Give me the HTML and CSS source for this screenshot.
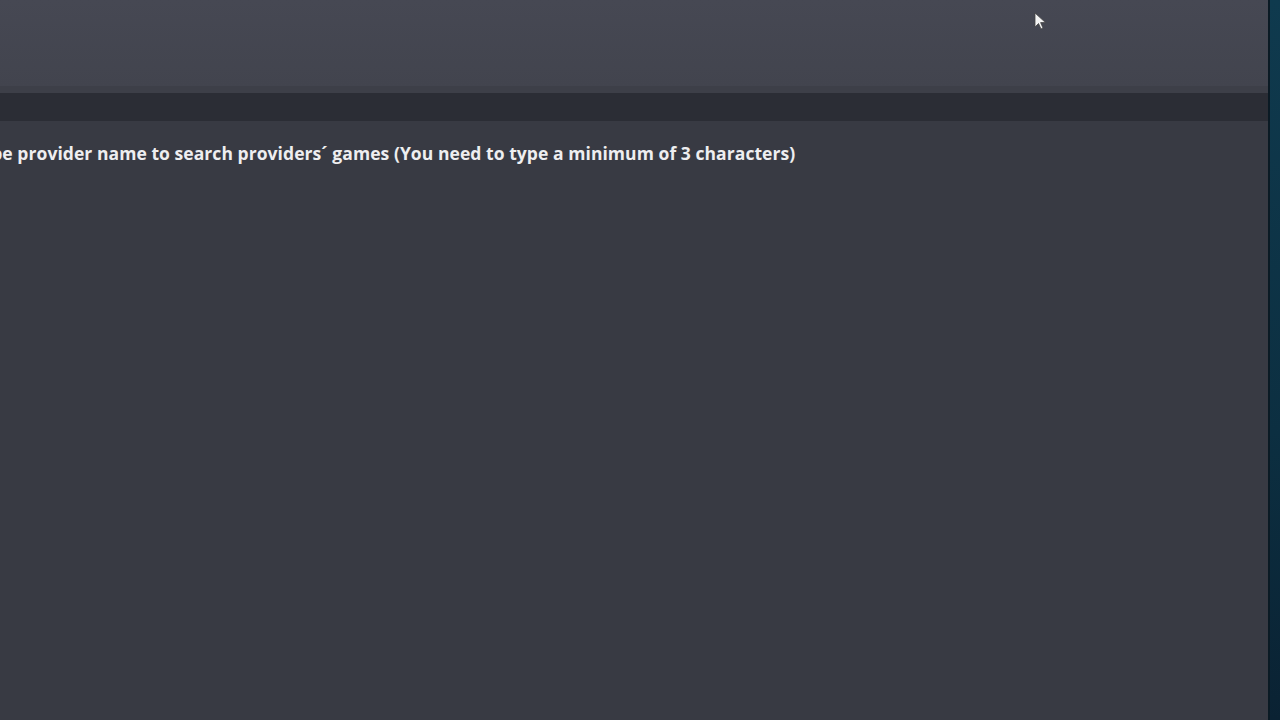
FILE: index.html
```html
<!DOCTYPE html>
<html>
<head>
<meta charset="utf-8">
<link rel="stylesheet" href="styles.css">
</head>
<body>
<div class="page">
  <main class="panel">
    <header class="top"></header>
    <div class="edge"></div>
    <div class="bar"></div>
    <section class="content">
      <p class="hint">Type provider name to search providers´ games (You need to type a minimum of 3 characters)</p>
    </section>
  </main>
  <aside class="strip"></aside>
</div>
<svg class="cursor" width="14" height="20" viewBox="0 0 14 20">
  <path d="M1 1 L1 15 L4.5 11.5 L7 17 L9 16 L6.6 10.6 L11.5 10.6 Z" fill="#f4f4f4" stroke="#444" stroke-width="0.8"/>
</svg>
</body>
</html>
```
FILE: styles.css
```css
html, body {
  margin: 0;
  padding: 0;
  width: 1280px;
  height: 720px;
  overflow: hidden;
  background: #383a43;
}
.page {
  display: flex;
  width: 1280px;
  height: 720px;
}
.panel {
  flex: 0 0 1268px;
  display: flex;
  flex-direction: column;
  background: #383a43;
  overflow: hidden;
}
.top {
  height: 86px;
  background: linear-gradient(#464853, #42444e);
}
.edge {
  height: 7px;
  background: #3d3f48;
}
.bar {
  height: 28px;
  background: #2b2d35;
}
.content {
  flex: 1;
  padding-top: 21px;
}
.hint {
  margin: 0 0 0 -29px;
  font-family: "Open Sans", Lato, sans-serif;
  font-weight: 700;
  font-size: 17.5px;
  line-height: 22px;
  color: #eeeef0;
  white-space: nowrap;
  letter-spacing: 0.06px;
}
.strip {
  flex: 1;
  background: linear-gradient(#0f3a4e, #0c2f41 60%, #0a2233);
  border-left: 2px solid #0a1a24;
}
.cursor {
  position: absolute;
  left: 1034px;
  top: 12px;
}
```
